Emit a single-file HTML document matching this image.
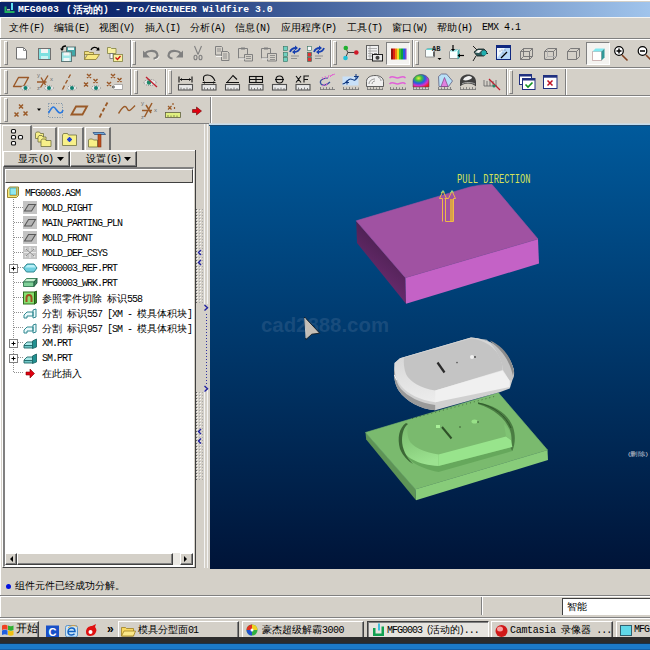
<!DOCTYPE html>
<html><head><meta charset="utf-8">
<style>
*{margin:0;padding:0;box-sizing:border-box}
html,body{width:650px;height:650px;overflow:hidden;background:#d4d0c8;font-family:"Liberation Sans",sans-serif}
.a{position:absolute}
svg{position:absolute;overflow:visible}
#title{left:0;top:2px;width:650px;height:15px;background:linear-gradient(90deg,#0a246a 0%,#0a246a 15%,#a0c4ec 100%)}
.menu{top:17px;height:21px;font-size:10px;line-height:22px;color:#000;white-space:nowrap}
.m{font-family:"Liberation Mono",monospace;letter-spacing:-1px}
.hl{background:#fff}
.sh{background:#808080}
.grip{position:absolute;width:4px;border-left:1px solid #fff;border-top:1px solid #fff;border-right:1px solid #808080;border-bottom:1px solid #808080}
.vsep{position:absolute;width:2px;border-left:1px solid #808080;border-right:1px solid #fff}
#vp{left:210px;top:125px;width:440px;height:444px;background:linear-gradient(180deg,#005a9c 0%,#001438 100%)}
.tree{position:absolute;left:42px;margin-top:1px;font-size:10px;line-height:15px;color:#000;white-space:nowrap;height:15px}
.btn{position:absolute;border-left:1px solid #fff;border-top:1px solid #fff;border-right:1px solid #404040;border-bottom:1px solid #404040;box-shadow:inset -1px -1px 0 #808080}
.tb{position:absolute;font-size:10px;line-height:15px;white-space:nowrap;color:#000}
</style></head><body>
<!-- outer light border -->
<div class="a hl" style="left:0;top:0;width:650px;height:1px"></div>
<div class="a hl" style="left:0;top:0;width:1px;height:618px"></div>
<!-- title -->
<div id="title" class="a"></div>
<div class="a" style="left:18px;top:2px;height:15px;color:#fff;font:bold 9.72px/15px 'Liberation Mono',monospace;white-space:nowrap">MFG0003</div>
<div class="a" style="left:66px;top:2px;height:15px;color:#fff;font:bold 9.72px/15px 'Liberation Mono',monospace;white-space:nowrap">(</div>
<div class="a" style="left:73px;top:2px;height:15px;color:#fff;font:bold 9.5px/15px 'Liberation Sans',sans-serif;white-space:nowrap;letter-spacing:0.2px">活动的</div>
<div class="a" style="left:103px;top:2px;height:15px;color:#fff;font:bold 9.72px/15px 'Liberation Mono',monospace;white-space:nowrap">)</div>
<div class="a" style="left:115px;top:2px;height:15px;color:#fff;font:bold 9.72px/15px 'Liberation Mono',monospace;white-space:nowrap">- Pro/ENGINEER Wildfire 3.0</div>
<svg style="left:0;top:0" width="20" height="18"><path d="M4.5 6.5h2v4.5h8v2h-10z" fill="#20b060"/><rect x="11" y="3" width="2" height="7" fill="#60e0f0"/><rect x="7" y="9" width="3" height="1.5" fill="#c0c0c0"/></svg>

<div class="a" style="left:0;top:17px;width:650px;height:1px;background:#f4f4f2"></div>
<!-- menu -->
<div class="a menu" style="left:9px">文件<span class="m">(F)</span></div>
<div class="a menu" style="left:54px">编辑<span class="m">(E)</span></div>
<div class="a menu" style="left:99px">视图<span class="m">(V)</span></div>
<div class="a menu" style="left:145px">插入<span class="m">(I)</span></div>
<div class="a menu" style="left:190px">分析<span class="m">(A)</span></div>
<div class="a menu" style="left:235px">信息<span class="m">(N)</span></div>
<div class="a menu" style="left:281px">应用程序<span class="m">(P)</span></div>
<div class="a menu" style="left:347px">工具<span class="m">(T)</span></div>
<div class="a menu" style="left:392px">窗口<span class="m">(W)</span></div>
<div class="a menu" style="left:437px">帮助<span class="m">(H)</span></div>
<div class="a menu m" style="left:482px;letter-spacing:-0.5px">EMX 4.1</div>

<!-- horizontal separators -->
<div class="a sh" style="left:0;top:38px;width:650px;height:1px"></div>
<div class="a hl" style="left:0;top:39px;width:650px;height:1px"></div>
<div class="a sh" style="left:0;top:67px;width:650px;height:1px"></div>
<div class="a hl" style="left:0;top:68px;width:650px;height:1px"></div>
<div class="a sh" style="left:0;top:95px;width:650px;height:1px"></div>
<div class="a hl" style="left:0;top:96px;width:650px;height:1px"></div>
<div class="a sh" style="left:0;top:123px;width:211px;height:1px"></div>

<!-- toolbar vertical separators -->
<div class="vsep" style="left:130px;top:40px;height:27px"></div>
<div class="vsep" style="left:330px;top:40px;height:27px"></div>
<div class="vsep" style="left:412px;top:40px;height:27px"></div>
<div class="vsep" style="left:130px;top:69px;height:26px"></div>
<div class="vsep" style="left:165px;top:69px;height:26px"></div>
<div class="vsep" style="left:506px;top:69px;height:26px"></div>
<div class="vsep" style="left:565px;top:69px;height:26px"></div>
<div class="vsep" style="left:210px;top:97px;height:27px"></div>
<!-- grips -->
<div class="grip" style="left:4px;top:41px;height:24px"></div>
<div class="grip" style="left:132px;top:41px;height:24px"></div>
<div class="grip" style="left:333px;top:41px;height:24px"></div>
<div class="grip" style="left:415px;top:41px;height:24px"></div>
<div class="grip" style="left:4px;top:70px;height:24px"></div>
<div class="grip" style="left:134px;top:70px;height:24px"></div>
<div class="grip" style="left:168px;top:70px;height:24px"></div>
<div class="grip" style="left:509px;top:70px;height:24px"></div>
<div class="grip" style="left:4px;top:98px;height:24px"></div>
<!-- pressed buttons -->
<div class="a" style="left:386px;top:42px;width:24px;height:23px;background:#f4f3f0;border-left:1px solid #808080;border-top:1px solid #808080;border-right:1px solid #fff;border-bottom:1px solid #fff"></div>
<div class="a" style="left:586px;top:42px;width:24px;height:23px;background:#f4f3f0;border-left:1px solid #808080;border-top:1px solid #808080;border-right:1px solid #fff;border-bottom:1px solid #fff"></div>

<!-- ROW 1 ICONS -->
<svg style="left:0;top:0" width="650" height="130">
<!-- new -->
<path d="M16.5 47.5h7l3 3v8.5h-10z" fill="#fff" stroke="#707070"/>
<path d="M23.5 47.5v3h3" fill="none" stroke="#909090"/>
<!-- save -->
<rect x="38.5" y="48.5" width="12" height="11" fill="#7ee0e0" stroke="#707070"/>
<rect x="41" y="49" width="7" height="4" fill="#f4f4f4"/>
<rect x="41" y="56" width="7" height="3" fill="#c8f4f4"/>
<!-- save as -->
<rect x="66.5" y="47" width="9" height="9" fill="#40a8a8" stroke="#607070"/>
<rect x="68" y="47.5" width="6" height="2.5" fill="#e8f8f8"/>
<rect x="61.5" y="52" width="10" height="9.5" fill="#a0e8e8" stroke="#607878"/>
<rect x="63.5" y="52.5" width="6" height="3" fill="#f4f4f4"/>
<rect x="63.5" y="58" width="6" height="3" fill="#f0f8f8"/>
<path d="M66 46c-3 0-4 1-4 3.5" fill="none" stroke="#000" stroke-width="1.3"/><path d="M60 48.5l2 2.5 2-2.5z" fill="#000"/>
<!-- open -->
<path d="M84.5 51.5h4l1 1h4v2h-9z" fill="#f0e080" stroke="#8a7a30" stroke-width="0.8"/>
<path d="M84.5 59.5l3-5h12l-3.5 5z" fill="#f8e880" stroke="#8a7a30" stroke-width="0.8"/>
<path d="M84.5 54v5.5" stroke="#8a7a30" stroke-width="0.8"/>
<path d="M91 50c1-3 5-3.5 7-1" fill="none" stroke="#000" stroke-width="1.3"/><path d="M96 50.5l3.5 0 -0.5-3.5z" fill="#000"/>
<!-- checkout -->
<path d="M107.5 47.5h3l1 1h4.5v5h-8.5z" fill="#f8f0a0" stroke="#808040" stroke-width="0.8"/>
<rect x="110" y="53.5" width="3" height="5" fill="#fff" stroke="#707070" stroke-width="0.8"/>
<rect x="113.5" y="54.5" width="9" height="7" fill="#f8f0a0" stroke="#808040" stroke-width="0.8"/>
<path d="M115.5 57.5l2 2 3-3.5" fill="none" stroke="#d01010" stroke-width="1.3"/>
<!-- undo -->
<path d="M145 54.5c1-4 10-5 12-1 1.5 3-1 5-3.5 5" fill="none" stroke="#808080" stroke-width="2.2"/>
<path d="M143 50.5v7h7z" fill="#808080"/>
<path d="M155 59.5c2 0 4-1 4-3" fill="none" stroke="#fff" stroke-width="0.8"/>
<!-- redo -->
<path d="M181 54.5c-1-4-10-5-12-1-1.5 3 1 5 3.5 5" fill="none" stroke="#808080" stroke-width="2.2"/>
<path d="M183 50.5v7h-7z" fill="#808080"/>
<!-- cut -->
<path d="M194.5 46l3.5 8.5M201.5 46l-3.5 8.5" stroke="#808080" stroke-width="1.1"/>
<ellipse cx="195.5" cy="57.5" rx="1.5" ry="2.3" fill="none" stroke="#808080" stroke-width="1.1"/>
<ellipse cx="200.5" cy="57.5" rx="1.5" ry="2.3" fill="none" stroke="#808080" stroke-width="1.1"/>
<!-- copy -->
<g fill="#d4d0c8" stroke="#808080" stroke-width="1"><path d="M215.5 46.5h6l1 1v7.5h-7z"/><path d="M221.5 51.5h6l1.5 1.5v7.5h-7.5z"/><path d="M238.5 48.5h9v9.5h-9z"/><path d="M244.5 54.5h8v6.5h-8z"/><path d="M261.5 48.5h9v9.5h-9z"/><path d="M267.5 53.5h9v7.5h-9z"/></g>
<g stroke="#808080" stroke-width="0.8"><path d="M217 49h4M217 51h4M223 54h4M223 56h4M223 58h4M246 56.5h5M246 58.5h5M270 55.5h5M270 57.5h5M270 59.5h5"/></g>
<path d="M241 47.5h4v2h-4zM264 47.5h4v2h-4z" fill="#808080"/>
<g fill="#fff"><path d="M216 56h6v0.8h-6zM239 58.5h6v0.8h-6zM262 58.5h6v0.8h-6z"/></g>
<!-- regen 1 -->
<g stroke="#307060" stroke-width="0.6"><rect x="283.5" y="46.5" width="4" height="4" fill="#70d0c0"/><rect x="283.5" y="52.5" width="4" height="4" fill="#70d0c0"/><rect x="283.5" y="57.5" width="4" height="4" fill="#70d0c0"/>
<rect x="307.5" y="46.5" width="4" height="4" fill="#f8f8f8"/><rect x="307.5" y="52.5" width="4" height="4" fill="#e03030"/><rect x="307.5" y="57.5" width="4" height="4" fill="#e03030"/></g>
<g fill="none" stroke="#1840b0" stroke-width="1.8"><path d="M290 52c1-3 3-4 6-4M300 48c-1 3-3 4-6 4M314 52c1-3 3-4 6-4M324 48c-1 3-3 4-6 4"/></g>
<g fill="#1840b0"><path d="M295 45.5l3 2.5-3 2.5zM295 49.5l-3 2.5 3 2.5zM319 45.5l3 2.5-3 2.5zM319 49.5l-3 2.5 3 2.5z"/></g>
<path d="M291 56h8M291 58.5h6M315 56h8M315 58.5h6" stroke="#909090" stroke-width="1"/>
<!-- datum display -->
<path d="M346 48.5l1.8 4h8.5M347.8 52.5l-2.3 5.5" stroke="#404040" stroke-width="1" fill="none"/>
<circle cx="345.8" cy="48" r="2.3" fill="#20b030"/><circle cx="356.3" cy="52.5" r="2.3" fill="#d01828"/><circle cx="345.5" cy="58" r="2.3" fill="#20c0d8"/>
<!-- report -->
<rect x="366.5" y="45.5" width="12" height="14" fill="#f0f0f0" stroke="#606060"/>
<path d="M368 48.5h9M368 51h9M368 53.5h5M368 56h4M370 46v13" stroke="#a0a0a0" stroke-width="0.8"/>
<rect x="372.5" y="54.5" width="10" height="6.5" fill="#e8e8e8" stroke="#202020"/>
<circle cx="377.5" cy="57.8" r="2" fill="#404040"/><rect x="374" y="53.5" width="3" height="1.5" fill="#202020"/>
<!-- rainbow -->
<g><rect x="391" y="48.5" width="2" height="11" fill="#901010"/><rect x="393" y="48.5" width="2" height="11" fill="#e02010"/><rect x="395" y="48.5" width="2" height="11" fill="#f08010"/><rect x="397" y="48.5" width="2" height="11" fill="#f0e020"/><rect x="399" y="48.5" width="2" height="11" fill="#40c030"/><rect x="401" y="48.5" width="2" height="11" fill="#10a040"/><rect x="403" y="48.5" width="2" height="11" fill="#2060e0"/><rect x="405" y="48.5" width="1.5" height="11" fill="#8040d0"/></g>
<!-- AB -->
<path d="M425.5 50l2-1.5h7v8.5h-9z" fill="#f8ffff" stroke="#808080" stroke-width="0.8"/>
<path d="M426 50l1.5-1.5h7l-1 1.5z" fill="#60d8d8"/>
<text x="432" y="50.5" font-family="Liberation Mono" font-size="7" font-weight="bold" fill="#202020">AB</text>
<rect x="433" y="51.5" width="2" height="5" fill="#606060"/>
<path d="M437.5 58h4l-2 2z" fill="#000"/>
<!-- view arrows -->
<path d="M449.5 51.5l2-2h6l1 1v8h-9z" fill="#f8ffff" stroke="#808080" stroke-width="0.8"/>
<path d="M457.5 51l2-2v9l-2 1.5z" fill="#40b0b0"/>
<path d="M450 51.5l2-2h6l-2 2z" fill="#90e8e8"/>
<path d="M453 45v5" stroke="#000" stroke-width="1.2"/><path d="M451 49h4l-2 2.5z" fill="#000"/>
<path d="M464 55.5h-5" stroke="#000" stroke-width="1.2"/><path d="M460 53.5v4l-2.5-2z" fill="#000"/>
<!-- spin -->
<path d="M473 46l4 4M476 56l-3 5M481 53.5h7" stroke="#202020" stroke-width="1"/>
<path d="M474 52l4-3h6l3 3-3 4h-7z" fill="#305858" stroke="#102020" stroke-width="0.8"/>
<path d="M475 52.5l3-2.5h4l-3 3z" fill="#f0f0f0"/>
<circle cx="484" cy="53" r="2.5" fill="#20b0b0"/>
<!-- window icon -->
<rect x="496.5" y="45.5" width="14" height="14" fill="#b8d8f8" stroke="#102880"/>
<rect x="496.5" y="45.5" width="14" height="2.5" fill="#102880"/>
<path d="M497 48h8l-8 10z" fill="#f0f8ff"/>
<path d="M501 58l6-6" stroke="#000" stroke-width="1.2"/>
<g fill="#607090"><circle cx="500" cy="51" r="0.6"/><circle cx="502" cy="50" r="0.6"/><circle cx="503" cy="53" r="0.6"/><circle cx="505" cy="50" r="0.6"/></g>
<!-- wire cubes -->
<g fill="none" stroke="#707070" stroke-width="0.9">
<path d="M520.5 51.5h9v8h-9zM520.5 51.5l3-3h9l-3 3M532.5 48.5v8l-3 3M523.5 48.5v8h9M523.5 56.5l-3 3"/>
<path d="M544.5 51.5h9v8h-9zM544.5 51.5l3-3h9l-3 3M556.5 48.5v8l-3 3"/>
<path d="M547.5 48.5v8h9M547.5 56.5l-3 3" stroke="#b0b0b0"/>
<path d="M567.5 51.5h9v8h-9zM567.5 51.5l3-3h9l-3 3M579.5 48.5v8l-3 3"/>
</g>
<!-- shaded cube -->
<path d="M592.5 51.5h9v9h-9z" fill="#fff" stroke="#a07070" stroke-width="0.5"/>
<path d="M592.5 51.5l3-3h9l-3 3z" fill="#80e8f0"/>
<path d="M601.5 51.5l3-3v9l-3 3z" fill="#309898"/>
<!-- zoom in/out -->
<path d="M622 55l5.5 5.5M646 55l5.5 5.5" stroke="#804020" stroke-width="1.6"/>
<circle cx="619" cy="51" r="4.3" fill="#fff" stroke="#000" stroke-width="1.2"/>
<circle cx="642.5" cy="51" r="4.3" fill="#fff" stroke="#000" stroke-width="1.2"/>
<path d="M616.5 51h5M619 48.5v5M640 51h5" stroke="#000" stroke-width="1.4"/>
<!-- ===== ROW 2 ===== -->
<g fill="none" stroke="#9a5828" stroke-width="1.4" stroke-linejoin="round">
<path d="M13.5 86.5l5-9h10l-5 9z"/>
<path d="M48 75.5l-7.5 12M37 82h9.5M41 77.5l4.5 7.5"/>
<path d="M70.5 74.5l-2 3.5M67.5 80l-2 3.5M64.5 85.5l-2 4"/>
<path d="M87 74l4 4M91 74l-4 4M93.5 79l4 4M97.5 79l-4 4M84 82.5l4 4M88 82.5l-4 4"/>
<path d="M111 74l4 4M115 74l-4 4M117.5 78l4 4M121.5 78l-4 4M107 82l4 4M111 82l-4 4"/>
</g>
<g font-family="Liberation Sans" font-size="6" fill="#707070"><text x="37" y="77">y</text><text x="37" y="90">z</text><text x="50" y="81">x</text></g>
<!-- eyes -->
<g><ellipse cx="25.5" cy="88" rx="4.5" ry="2.3" fill="#e8e8e8" stroke="#606060" stroke-width="0.6" stroke-dasharray="1 1"/><circle cx="25.5" cy="88" r="2" fill="#108070"/>
<ellipse cx="49" cy="88" rx="4.5" ry="2.3" fill="#e8e8e8" stroke="#606060" stroke-width="0.6" stroke-dasharray="1 1"/><circle cx="49" cy="88" r="2" fill="#108070"/>
<ellipse cx="72" cy="88" rx="4.5" ry="2.3" fill="#e8e8e8" stroke="#606060" stroke-width="0.6" stroke-dasharray="1 1"/><circle cx="72" cy="88" r="2" fill="#108070"/>
<ellipse cx="96" cy="88" rx="4.5" ry="2.3" fill="#e8e8e8" stroke="#606060" stroke-width="0.6" stroke-dasharray="1 1"/><circle cx="96" cy="88" r="2" fill="#108070"/></g>
<path d="M114.5 84.5h8v5h-8l-2-2.5z" fill="#fff" stroke="#909090" stroke-width="0.7"/>
<path d="M115 87h-3" stroke="#000" stroke-width="0.8"/>
<!-- eye crossed -->
<ellipse cx="150" cy="82.5" rx="6" ry="3" fill="#e8e8e8" stroke="#606060" stroke-width="0.7" stroke-dasharray="1 1"/>
<circle cx="149" cy="82.5" r="2.2" fill="#208868"/>
<path d="M146 77l11 10" stroke="#c02030" stroke-width="1.3"/>
<!-- rulers (white boxed) -->
<g fill="#e8e8e8" stroke="#505050" stroke-width="1.1">
<rect x="178.5" y="84.5" width="14" height="5.5"/><rect x="202" y="84.5" width="14" height="5.5"/><rect x="225.5" y="84.5" width="14" height="5.5"/><rect x="249" y="84.5" width="14" height="5.5"/><rect x="272.5" y="84.5" width="14" height="5.5"/><rect x="296" y="84.5" width="14" height="5.5"/>
</g>
<g stroke="#606060" stroke-width="0.8"><path d="M181 87.5v2M184 88v2M187 87.5v2M190 88v2M204.5 87.5v2M207.5 88v2M210.5 87.5v2M213.5 88v2M228 87.5v2M231 88v2M234 87.5v2M237 88v2M251.5 87.5v2M254.5 88v2M257.5 87.5v2M260.5 88v2M275 87.5v2M278 88v2M281 87.5v2M284 88v2M298.5 87.5v2M301.5 88v2M304.5 87.5v2M307.5 88v2"/></g>
<g fill="none" stroke="#101010" stroke-width="1.1">
<path d="M179 76.5v6M192 76.5v6M180 79.5h11"/>
<path d="M202.5 82.5h13M203.5 81v-3c0-2 2-3 4-3 3 0 6 2 7.5 6"/>
<path d="M226 82.5h13M227 82.5l6-7 4 4"/>
<rect x="249.5" y="76.5" width="13" height="6"/><path d="M249.5 79.5h13M256 76.5v6"/>
<circle cx="279.5" cy="79.5" r="3.5"/><path d="M275 79.5h9"/>
<path d="M296 76l5 6.5M301 76l-5 6.5M304 82.5v-6.5h5M304 79.5h4"/>
</g>
<g fill="#101010"><path d="M180 79.5l2-1.5v3zM191 79.5l-2-1.5v3zM203 82.5l2-1.3v2.6zM215 82.5l-2-1.3v2.6z"/></g>
<!-- tick rulers -->
<g stroke="#707070" stroke-width="0.8"><path d="M320 89.5h15M343 89.5h16M367 89.5h16M390 89.5h16M413 89.5h16M438 89.5h14M460 89.5h16M320.5 87v2.5M323.5 87.5v2M326.5 87v2.5M329.5 87.5v2M332.5 87v2.5M343.5 87v2.5M346.5 87.5v2M349.5 87v2.5M352.5 87.5v2M355.5 87v2.5M358.5 87.5v2M367.5 87v2.5M370.5 87.5v2M373.5 87v2.5M376.5 87.5v2M379.5 87v2.5M382.5 87.5v2M390.5 87v2.5M393.5 87.5v2M396.5 87v2.5M399.5 87.5v2M402.5 87v2.5M405.5 87.5v2M413.5 87v2.5M416.5 87.5v2M419.5 87v2.5M422.5 87.5v2M425.5 87v2.5M428.5 87.5v2M438.5 87v2.5M441.5 87.5v2M444.5 87v2.5M447.5 87.5v2M450.5 87v2.5M460.5 87v2.5M463.5 87.5v2M466.5 87v2.5M469.5 87.5v2M472.5 87v2.5M475.5 87.5v2"/></g>
<!-- curvature -->
<path d="M328 78c-6 0-9 3-7 6 2 2 6 1 9-2" fill="none" stroke="#3050a0" stroke-width="1.2"/>
<path d="M322 77l2 3M325 76l1 3M329 75l-1 3M333 74l-3 3M335 74l-5 2M322 86l3-2M326 86l1-3" stroke="#e060d0" stroke-width="0.9"/>
<!-- blue curve box -->
<rect x="342.5" y="76.5" width="16" height="9" fill="#c8e0f8"/>
<path d="M342.5 84c4 0 5-5 8-5s4 4 8-3" fill="none" stroke="#103880" stroke-width="1.1"/>
<path d="M347 80.5v4M345 82.5h4M356 74v5M354 76.5h4" stroke="#103880" stroke-width="1"/>
<!-- contour dome -->
<path d="M366.5 86.5v-5c0-4 4-6 8.5-6s8.5 2 8.5 6v5z" fill="#f0f0f0" stroke="#505050" stroke-width="0.9"/>
<path d="M369 84c0-3 3-5 6-5M372 84c0-2 2-3 3-3M378 77c2 1 3 2 3 4" fill="none" stroke="#808080" stroke-width="0.8"/>
<!-- waves -->
<path d="M389.5 78c3-3 5 0 8 0s5-3 8 0M389.5 84c3-3 5 0 8 0s5-3 8 0" fill="none" stroke="#e060d8" stroke-width="1.5"/>
<!-- rainbow dome -->
<defs><radialGradient id="rg" cx="0.35" cy="0.3" r="0.8"><stop offset="0" stop-color="#e8f040"/><stop offset="0.25" stop-color="#40c040"/><stop offset="0.5" stop-color="#2060e0"/><stop offset="0.75" stop-color="#d030d0"/><stop offset="1" stop-color="#f02020"/></radialGradient></defs>
<path d="M413 87v-6c0-4 4-6.5 8-6.5s8 2.5 8 6.5v6z" fill="url(#rg)" stroke="#404040" stroke-width="0.5"/>
<!-- prism -->
<path d="M438.5 76.5l3-2.5h5l6 7-4 5.5h-9.5z" fill="#b8e0f8" stroke="#606080" stroke-width="0.8"/>
<path d="M441 86.5l3.5-9 3.5 9z" fill="#e080e0" stroke="#804080" stroke-width="0.7"/>
<!-- gray dome -->
<path d="M460 86.5v-5c0-4.5 4-7 8-7s8 2.5 8 7v5c-2-2-5-3-8-3s-6 1-8 3z" fill="#404040"/>
<path d="M463 80c1-3 4-4 6-4s3 1 3 2c-2 2-6 3-9 2z" fill="#f0f0f0"/>
<path d="M462 84c2-2 10-2 13 0" fill="none" stroke="#c0c0c0" stroke-width="0.8"/>
<!-- ticks crossed -->
<path d="M484 80v6M487 81v5M490 80v6M493 81v5M496 80v6M484 86h13" stroke="#606060" stroke-width="0.8"/>
<path d="M489 79l11 11" stroke="#c02030" stroke-width="1.3"/>
<circle cx="494" cy="86" r="1.5" fill="#208868"/>
<!-- window check / x -->
<rect x="519.5" y="74.5" width="12" height="10" fill="#fff" stroke="#203080"/>
<rect x="519.5" y="74.5" width="12" height="2" fill="#203080"/>
<rect x="522.5" y="78.5" width="12.5" height="11" fill="#fff" stroke="#203080"/>
<rect x="522.5" y="78.5" width="12.5" height="2" fill="#203080"/>
<path d="M525.5 84.5l2.5 2.5 4.5-4.5" fill="none" stroke="#109020" stroke-width="1.6"/>
<rect x="543.5" y="75.5" width="13.5" height="13" fill="#fff" stroke="#203080"/>
<rect x="543.5" y="75.5" width="13.5" height="2.2" fill="#203080"/>
<path d="M547.5 80.5l5 5M552.5 80.5l-5 5" stroke="#c01020" stroke-width="1.5"/>
<!-- ===== ROW 3 ===== -->
<g fill="none" stroke="#9a5a28" stroke-width="1.5">
<path d="M19 104.5l4 4M23 104.5l-4 4M23.5 111.5l4 4M27.5 111.5l-4 4M14.5 112.5l4 4M18.5 112.5l-4 4"/>
<path d="M71.5 114.5l4.5-8h11l-4.5 8z" stroke-width="1.8"/>
<path d="M107.5 102.5l-2 3.5M104.5 108l-2 3.5M101.5 113.5l-2 4" stroke-width="1.8"/>
<path d="M118.5 113.5c2-3 4-7 6.5-7s2 4 4 4 4-3 6-5" stroke-width="1.4"/>
<path d="M152 103l-7.5 14M142 110.5h10M146 105l5 8" />
<path d="M168 106l3.5 3.5M171.5 106l-3.5 3.5M173 103v2M174.5 107v2" stroke-width="1.2"/>
</g>
<g font-family="Liberation Sans" font-size="6" fill="#707070"><text x="141" y="105">y</text><text x="141" y="119">z</text><text x="154" y="112">x</text></g>
<path d="M37 108.5h4l-2 2.5z" fill="#000"/>
<rect x="48.5" y="103.5" width="14" height="14" fill="none" stroke="#6080a0" stroke-width="0.8" stroke-dasharray="1 1.5"/>
<path d="M48.5 113c2-3 3-6 5-6s4 6 6.5 6 2.5-2 3-3" fill="none" stroke="#2878e0" stroke-width="1.6"/>
<rect x="165.5" y="112.5" width="15" height="5" fill="#e0f080" stroke="#606040" stroke-width="0.8"/>
<path d="M168 115v2M171 115.5v1.5M174 115v2M177 115.5v1.5" stroke="#606040" stroke-width="0.7"/>
<path d="M192.5 109.5h4v-2.5l5 4-5 4v-2.5h-4z" fill="#e00010" stroke="#700000" stroke-width="0.6"/>
</svg>
<!-- viewport -->
<div id="vp" class="a"></div>
<div class="a" style="left:209px;top:123px;width:441px;height:1px;background:#d0d8dc"></div>
<div class="a" style="left:209px;top:124px;width:441px;height:1px;background:#c0dcf0"></div>
<div class="a" style="left:209px;top:125px;width:441px;height:1px;background:#1a4a74"></div>
<svg style="left:0;top:0" width="650" height="570">
<!-- watermark -->
<text x="261" y="331.5" font-family="Liberation Sans" font-weight="bold" font-size="20" fill="#3c6690" fill-opacity="0.42" textLength="128" lengthAdjust="spacingAndGlyphs">cad2888.com</text>
<!-- magenta block -->
<defs><linearGradient id="mg" x1="0.6" y1="0.2" x2="0.3" y2="0.8"><stop offset="0" stop-color="#4a2050"/><stop offset="1" stop-color="#6e2c72"/></linearGradient></defs>
<path d="M356.2 220.8L405.4 277.7L406 303.8L357 243z" fill="url(#mg)"/>
<path d="M405.4 277.7L538 239L539 263.6L406 303.8z" fill="#c462c6"/>
<path d="M356.2 220.8L470 187Q482 184 492 184.5L538 239L405.4 277.7z" fill="#a052a2" stroke="#a052a2" stroke-width="0.6"/>
<!-- pull direction -->
<text x="457" y="183.3" font-family="Liberation Mono" font-size="12" fill="#d4e258" textLength="73.5" lengthAdjust="spacingAndGlyphs">PULL DIRECTION</text>
<g fill="none" stroke="#f0b848" stroke-width="1">
<path d="M442.5 221.5V198.5H439.5L443 191L446.5 198.5H444.5"/>
<path d="M445.5 221.5H453.5V198.5H455.5L452 191L448.5 198.5H445.5z"/>
</g>
<rect x="450" y="199" width="3" height="22" fill="#d8a048"/>
<path d="M441 193l2-2.5 1.5 2M450.5 193l1.5-2.5 1.5 2" stroke="#90e090" fill="none"/>
<!-- green plate -->
<path d="M365.5 432.5L415.4 489.2L416 500.3L366.2 439.4z" fill="#5e9456"/>
<path d="M415.4 489.2L547.5 450L548 460L416 500.3z" fill="#88cc7a"/>
<path d="M365.5 432.5L498.4 392.8L547.5 450L415.4 489.2z" fill="#7aba6e" stroke="#7aba6e" stroke-width="0.6"/>
<!-- groove lit ring -->
<defs><linearGradient id="gr" x1="0" y1="0" x2="0.3" y2="1"><stop offset="0" stop-color="#7aba6e"/><stop offset="0.45" stop-color="#86ca7a"/><stop offset="1" stop-color="#9ce290"/></linearGradient>
<linearGradient id="gy" x1="0" y1="0" x2="0.2" y2="1"><stop offset="0" stop-color="#cfcfcf"/><stop offset="1" stop-color="#ececec"/></linearGradient></defs>
<path d="M406 423C400 428 398 436 400 446C404 458 418 466 438.5 468L438.5 454.6C424 452 412 447 409 440C407 434 407 429 408 426z" fill="url(#gr)"/>
<path d="M400 446C404 459 418 468 438.5 472L512.3 451L512.3 447L438.5 466C418 465 404 457 400 446z" fill="#66a85c"/>
<path d="M406 423C399 428 397 438 400 449C403 456 408 461 413 464C406 457 402 448 402 440C402 433 404 427 408 424z" fill="#3c6836"/>
<path d="M478 402.5C495 405 508 414 513 427C516 436 515 445 512.3 451L510.5 448C512 442 512 436 510 430C505 418 494 409 478 404z" fill="#4a7c42"/>
<path d="M438.5 454.6L506 436.5L511 440L512.3 447L438.5 466z" fill="#98e48c"/>
<path d="M506 436.5L511 440L510.5 434C509 430 507 427 504 424z" fill="#80c474"/>
<!-- slot in green -->
<path d="M442 427L451.5 438.5" stroke="#2e5028" stroke-width="2"/>
<rect x="436" y="425" width="4" height="3" fill="#a8f098"/>
<ellipse cx="474.5" cy="421.5" rx="3" ry="2" fill="#98e088"/><circle cx="478" cy="422" r="0.8" fill="#2e5028"/>
<circle cx="460" cy="427" r="0.8" fill="#385a30"/>
<path d="M412 418.5L496 396" stroke="#305028" stroke-width="0.7" stroke-dasharray="1 3" fill="none"/>
<path d="M478 403C494 406 506 416 511 428" fill="none" stroke="#2e5a2a" stroke-width="1"/>
<!-- gray piece -->
<path d="M394.6 363L400 358.3L471 337.5C492.7 339 510 352 514 371C514.5 375 513.5 378 512.7 379L509.8 388.4L500.3 392L435.2 410.3C420 409 406 401 399 391C395 385 394 378 394 372z" fill="#d0d0d0"/>
<path d="M394 372C394 378 395 385 399 391C406 401 420 409 435.2 410.3L435.2 405C420 403 407 396 401 389C397 384 395 378 394.5 368z" fill="#9a9a9a"/>
<path d="M394.6 363L400 358.3L471 337.5C492.7 339 510 352 514 371L509.8 381L435.2 402.3C420 400 408 394 402 387C397 381 395 375 394.6 368z" fill="url(#gy)"/>
<path d="M403.9 357.8L471 338.5C485 340 496 348 500 358C502 363 503 367 502.5 370L435.2 390.6C420 388 410 382 406 374C404 369 403.5 363 403.9 357.8z" fill="#c4c4c4"/>
<path d="M471 337.5C492.7 339 510 352 514 371L512.7 379L509.8 381L503 370C502 360 496 348 486.8 339.8z" fill="#c4c4c4"/>
<path d="M490 340.5C503 346 511 357 514 371L513 376C510 362 503 351 492 343z" fill="#8c8c8c"/>
<path d="M435.2 390.6L502.5 370.8L509.8 381L509.8 387L435.2 402.3z" fill="#f0f0f0"/>
<path d="M394.5 375L396.5 380" stroke="#f8f8f8" stroke-width="1"/>
<!-- slots in gray -->
<path d="M437.5 362.5L444.5 372.5" stroke="#2a2a2a" stroke-width="2.2"/>
<circle cx="472" cy="357" r="2" fill="#f0f0f0"/><circle cx="475" cy="357" r="0.9" fill="#404040"/>
<circle cx="457" cy="362.6" r="0.8" fill="#505050"/>
<text x="628" y="456" font-family="Liberation Sans" font-size="6" fill="#c8ccd8" textLength="20" lengthAdjust="spacingAndGlyphs">(删除)</text>
<!-- cursor -->
<path d="M304.5 317L319.7 333.2L311.8 334.2L305.9 339.6z" fill="#c4beb6" stroke="#101820" stroke-width="0.9"/>
<path d="M304.8 318L306 338" stroke="#e0e8f0" stroke-width="0.8"/>
</svg>

<!-- ===== left panel ===== -->
<!-- tabs -->
<div class="a" style="left:2px;top:125px;width:30px;height:26px;background:#d4d0c8;border-left:1px solid #fff;border-top:1px solid #fff;border-right:2px solid #707070"></div>
<div class="a" style="left:33px;top:127px;width:24px;height:23px;border-top:1px solid #fff;border-right:2px solid #707070"></div>
<div class="a" style="left:58px;top:127px;width:26px;height:23px;border-left:1px solid #fff;border-top:1px solid #fff;border-right:2px solid #707070"></div>
<div class="a" style="left:85px;top:127px;width:26px;height:23px;border-left:1px solid #fff;border-top:1px solid #fff;border-right:2px solid #707070"></div>
<svg style="left:0;top:0" width="120" height="155">
<g fill="#fff" stroke="#101010" stroke-width="1.1"><rect x="11.5" y="129.5" width="4" height="3.5" rx="1"/><rect x="11.5" y="135.5" width="4" height="3.5" rx="1"/><rect x="18.5" y="135.5" width="4" height="3.5" rx="1"/><rect x="11.5" y="141.5" width="4" height="3.5" rx="1"/></g>
<g fill="#f8f088" stroke="#707040" stroke-width="0.8"><path d="M35.5 133.5l1-1.5h3l1 1.5h3v5h-8z"/><path d="M38 137l1-1.5h3l1 1.5h3v5h-8z"/><path d="M41 140.5l1-1.5h3l1 1.5h5v6h-10z"/>
<path d="M62.5 135l1-1.5h4l1 1.5h8v10.5h-14z"/>
<path d="M88.5 140l1-1h3l1 1h4v7h-9z"/></g>
<path d="M67 139.5h5M69.5 137v5M67.8 137.8l3.4 3.4M71.2 137.8l-3.4 3.4" stroke="#2040d0" stroke-width="1.2"/>
<path d="M93 132.5h11l1.5 2h-11z" fill="#70a8d8" stroke="#305080" stroke-width="0.8"/>
<rect x="98" y="134.5" width="3" height="12.5" fill="#c05020" stroke="#803010" stroke-width="0.6"/>
</svg>
<!-- button strip panel -->
<div class="a" style="left:2px;top:150px;width:194px;height:418px;border-left:1px solid #fff;border-top:1px solid #fff;border-right:1px solid #404040;border-bottom:1px solid #404040"></div>
<div class="a hl" style="left:3px;top:150px;width:28px;height:1px;background:#d4d0c8"></div>
<div class="btn" style="left:3px;top:151px;width:67px;height:16px"></div>
<div class="btn" style="left:70px;top:151px;width:67px;height:16px"></div>
<div class="tb" style="left:18px;top:151px">显示<span class="m">(O)</span></div>
<div class="tb" style="left:86px;top:151px">设置<span class="m">(G)</span></div>
<svg style="left:0;top:0" width="200" height="200"><path d="M57 157h7l-3.5 4z M124 157h7l-3.5 4z" fill="#000"/></svg>
<!-- tree box -->
<div class="a" style="left:3px;top:167px;width:191px;height:400px;border-left:2px solid #808080;border-top:2px solid #808080;border-right:1px solid #fff;border-bottom:1px solid #fff;background:#fff"></div>
<div class="a" style="left:5px;top:169px;width:188px;height:14px;background:#d4d0c8;border-top:1px solid #fff;border-left:1px solid #fff;border-right:1px solid #404040;border-bottom:1px solid #404040"></div>
<!-- tree items -->
<div class="tree m" style="left:25px;top:185px">MFG0003.ASM</div>
<div class="tree m" style="top:200px">MOLD_RIGHT</div>
<div class="tree m" style="top:215px">MAIN_PARTING_PLN</div>
<div class="tree m" style="top:230px">MOLD_FRONT</div>
<div class="tree m" style="top:245px">MOLD_DEF_CSYS</div>
<div class="tree m" style="top:260px">MFG0003_REF.PRT</div>
<div class="tree m" style="top:275px">MFG0003_WRK.PRT</div>
<div class="tree" style="top:290px">参照零件切除<span class="m"> </span>标识<span class="m">558</span></div>
<div class="tree" style="top:305px">分割<span class="m"> </span>标识<span class="m">557 [XM - </span>模具体积块<span class="m">]</span></div>
<div class="tree" style="top:320px">分割<span class="m"> </span>标识<span class="m">957 [SM - </span>模具体积块<span class="m">]</span></div>
<div class="tree m" style="top:335px">XM.PRT</div>
<div class="tree m" style="top:350px">SM.PRT</div>
<div class="tree" style="top:365px">在此插入</div>
<!-- tree lines -->
<svg style="left:0;top:0" width="200" height="400">
<g stroke="#909090" stroke-width="1" stroke-dasharray="1 1" fill="none">
<path d="M13.5 199v174"/>
<path d="M14 207.5h9M14 222.5h9M14 237.5h9M14 252.5h9M18 267.5h5M14 282.5h9M14 297.5h9M14 312.5h9M14 327.5h9M18 342.5h5M18 357.5h5M14 372.5h9"/>
</g>
<g fill="#fff" stroke="#808080"><rect x="9.5" y="264.5" width="8" height="8"/><rect x="9.5" y="339.5" width="8" height="8"/><rect x="9.5" y="354.5" width="8" height="8"/></g>
<path d="M11.5 268.5h4M13.5 266.5v4M11.5 343.5h4M13.5 341.5v4M11.5 358.5h4M13.5 356.5v4" stroke="#000"/>
<!-- asm icon -->
<path d="M7.5 189.5 l2-2.5 h9 v8.5 l-2 2 h-9z" fill="#f8e878" stroke="#a08830"/>
<rect x="10" y="188" width="7" height="7" fill="#90e8f0" stroke="#40a0b0" stroke-width="0.8"/>
<path d="M16.5 188v7.5h-6.5" stroke="#c0a040" fill="none"/>
<!-- datum planes -->
<g fill="#c4c4c4"><rect x="23" y="201" width="14" height="13"/><rect x="23" y="216" width="14" height="13"/><rect x="23" y="231" width="14" height="13"/><rect x="23" y="246" width="14" height="13"/></g>
<g fill="#b4b4b4" stroke="#585858" stroke-width="1.1"><path d="M24.5 211l4-6.5h7l-4 6.5z"/><path d="M24.5 226l4-6.5h7l-4 6.5z"/><path d="M24.5 241l4-6.5h7l-4 6.5z"/></g>
<g stroke="#e8e8e8" stroke-width="1.2" fill="none"><path d="M25 248l10 9M35 248l-10 9M30 247v11M24 252.5h12"/></g>
<g stroke="#707070" stroke-width="0.8" fill="none"><path d="M26 249l8 7M34 249l-8 7"/></g>
<!-- ref prt -->
<path d="M23.5 268l3.5-4h7l3 4-3 4h-7.5z" fill="#70d0e0" stroke="#308890"/>
<path d="M25 267.5l2.5-2.5h6.5l2 2.5z" fill="#b8f0f8"/>
<!-- wrk prt -->
<path d="M23.5 282l3-3.5h10.5l-3 3.5z" fill="#c8f0d0" stroke="#307850" stroke-width="0.9"/>
<path d="M23.5 282h10.5v4.5h-10.5z" fill="#80d098" stroke="#307850" stroke-width="0.9"/>
<path d="M34 282l3-3.5v4.5l-3 3.5z" fill="#408860" stroke="#205840" stroke-width="0.9"/>
<!-- cut feature -->
<rect x="23.5" y="292" width="11" height="12" fill="#88e070" stroke="#307020"/>
<path d="M34.5 292l2-1v12l-2 1z" fill="#309020" stroke="#205010" stroke-width="0.8"/>
<path d="M26.5 302v-4a2.5 3 0 0 1 5 0v4" fill="none" stroke="#a05020" stroke-width="2"/>
<!-- split outlines -->
<g fill="#eafafc" stroke="#308890" stroke-width="1"><path d="M24 315l3-3h6v4h-6v2h-3z M33 310l3-1v8l-3 1z"/><path d="M24 330l3-3h6v4h-6v2h-3z M33 325l3-1v8l-3 1z"/></g>
<!-- xm sm -->
<g stroke="#206868" stroke-width="0.9"><path d="M24 345l3-3h6v3.5h-9z" fill="#a8e8e8"/><path d="M24 345.5h9v2.5h-9z" fill="#70c8c8"/><path d="M32.5 341l4-2v8l-4 1.5z" fill="#209090"/>
<path d="M24 360l3-3h6v3.5h-9z" fill="#a8e8e8"/><path d="M24 360.5h9v2.5h-9z" fill="#70c8c8"/><path d="M32.5 356l4-2v8l-4 1.5z" fill="#209090"/></g>
<!-- red arrow -->
<path d="M26 372h4v-3l4.5 4.5-4.5 4.5v-3h-4z" fill="#e00010" stroke="#800000" stroke-width="0.6"/>
</svg>
<!-- h scrollbar -->
<div class="a" style="left:5px;top:553px;width:188px;height:12px;background:#d4d0c8"></div>
<div class="btn" style="left:5px;top:553px;width:12px;height:12px"></div>
<div class="a" style="left:17px;top:553px;width:163px;height:12px;background:#ebe9e4"></div>
<div class="btn" style="left:17px;top:553px;width:156px;height:12px;background:#d4d0c8"></div>
<div class="btn" style="left:180px;top:553px;width:13px;height:12px"></div>
<svg style="left:0;top:0" width="200" height="600"><path d="M13 556v6l-3-3z M184 556v6l3-3z" fill="#000"/></svg>
<!-- splitter -->
<div class="a" style="left:195px;top:150px;width:1px;height:418px;background:#404040"></div>
<div class="a" style="left:204px;top:124px;width:1px;height:180px;background:#f4f4f4"></div>
<div class="a" style="left:207px;top:124px;width:1px;height:180px;background:#f4f4f4"></div>
<div class="a" style="left:204px;top:390px;width:1px;height:178px;background:#f4f4f4"></div>
<div class="a" style="left:207px;top:390px;width:1px;height:178px;background:#f4f4f4"></div>
<svg style="left:0;top:0" width="215" height="570">
<defs><pattern id="dots" x="196" y="209" width="3" height="3" patternUnits="userSpaceOnUse"><rect x="0" y="0" width="1" height="1" fill="#a8a8a8"/><rect x="1" y="1" width="1" height="1" fill="#f8f8f8"/></pattern></defs>
<rect x="196" y="209" width="7" height="94" fill="url(#dots)"/>
<rect x="196" y="392" width="7" height="88" fill="url(#dots)"/>
<path d="M196.5 209v94M196.5 392v88" stroke="#606060" stroke-dasharray="1 2"/>
<path d="M206.5 314v72" stroke="#3030a0" stroke-dasharray="1 2"/>
<g fill="none" stroke="#2020a0" stroke-width="1.4">
<path d="M201 250l-2.5 2.5 2.5 2.5M201 260l-2.5 2.5 2.5 2.5M201 429l-2.5 2.5 2.5 2.5M201 438.5l-2.5 2.5 2.5 2.5"/>
<path d="M204.5 305l3 2.7-3 2.7M204.5 386l3 2.7-3 2.7"/>
</g>
</svg>
<!-- status -->
<div class="a" style="left:6px;top:584px;width:5px;height:5px;border-radius:50%;background:#0010e0"></div>
<div class="tb" style="left:15px;top:578px">组件元件已经成功分解。</div>
<div class="a sh" style="left:0;top:595px;width:650px;height:1px"></div>
<div class="a hl" style="left:0;top:596px;width:650px;height:1px"></div>
<div class="a" style="left:481px;top:597px;width:2px;height:18px;border-left:1px solid #808080;border-right:1px solid #fff"></div>
<div class="a" style="left:562px;top:598px;width:88px;height:17px;background:#fff;border-left:1px solid #404040;border-top:1px solid #404040"></div>
<div class="tb" style="left:567px;top:599px">智能</div>

<!-- taskbar -->
<div class="a" style="left:0;top:617px;width:650px;height:1px;background:#808080"></div>
<div class="a" style="left:0;top:618px;width:650px;height:1px;background:#fff"></div>
<!-- start button -->
<div class="a" style="left:0;top:621px;width:39px;height:16px;border-top:1px solid #fff;border-right:1px solid #404040;box-shadow:inset -1px 0 0 #808080"></div>
<div class="tb" style="left:16px;top:621px;font-size:10.5px">开始</div>

<!-- task buttons -->
<div class="a" style="left:118px;top:621px;width:121px;height:16px;border-top:1px solid #fff;border-left:1px solid #fff;border-right:1px solid #404040;box-shadow:inset -1px 0 0 #808080"></div>
<div class="a" style="left:242px;top:621px;width:122px;height:16px;border-top:1px solid #fff;border-left:1px solid #fff;border-right:1px solid #404040;box-shadow:inset -1px 0 0 #808080"></div>
<div class="a" style="left:367px;top:621px;width:122px;height:16px;background:#e6e4df;border-top:1px solid #404040;border-left:1px solid #404040;border-right:1px solid #fff;box-shadow:inset 1px 1px 0 #808080"></div>
<div class="a" style="left:491px;top:621px;width:122px;height:16px;border-top:1px solid #fff;border-left:1px solid #fff;border-right:1px solid #404040;box-shadow:inset -1px 0 0 #808080"></div>
<div class="a" style="left:616px;top:621px;width:40px;height:16px;border-top:1px solid #fff;border-left:1px solid #fff"></div>
<svg style="left:0;top:0" width="650" height="650">
<path d="M2 625.5q3-1.5 5.5 0v4.5q-2.5-1.5-5.5 0z" fill="#f04020"/>
<path d="M8 625.5q3 1.5 5.5 0v4.5q-2.5 1.5-5.5 0z" fill="#30b030"/>
<path d="M2 630.5q3-1.5 5.5 0v4.5q-2.5-1.5-5.5 0z" fill="#2060e0"/>
<path d="M8 630.5q3 1.5 5.5 0v4.5q-2.5 1.5-5.5 0z" fill="#f0c010"/>
<!-- quick launch -->
<rect x="46" y="625.5" width="13" height="11.5" fill="#1850c8"/>
<text x="48.5" y="636" font-family="Liberation Sans" font-weight="bold" font-size="11" fill="#fff">C</text>
<rect x="65.5" y="625.5" width="12" height="11.5" rx="2" fill="#c8e4f8" stroke="#4080c0" stroke-width="0.8"/>
<path d="M68 631.5h7c0-2.5-1.5-3.5-3.3-3.5s-3.7 1.5-3.7 3.7 1.5 3.3 3.7 3.3c1.2 0 2.2-0.5 2.8-1.2" fill="none" stroke="#1060c0" stroke-width="1.5"/>
<path d="M77 627c-2-2-6-2-9 1" fill="none" stroke="#f0a020" stroke-width="0.9"/>
<path d="M86 632c0-4 3-6 6-6l4-2-1 3c1 1 2 3 1 5-1 3-4 4-6 4s-4-1-4-4z" fill="#e01010"/>
<circle cx="90.5" cy="632" r="2" fill="#fff"/>
<text x="107" y="633" font-family="Liberation Sans" font-weight="bold" font-size="12" fill="#000">»</text>
<!-- task icons -->
<path d="M121.5 627.5h4l1 1h7v7.5h-12z" fill="#f8d860" stroke="#a08020" stroke-width="0.8"/>
<path d="M121.5 636l2.5-5h11.5l-2 5z" fill="#fce888" stroke="#a08020" stroke-width="0.8"/>
<circle cx="252" cy="630" r="5.5" fill="#30b040"/>
<path d="M252 630L252 624.5A5.5 5.5 0 0 1 257.5 630z" fill="#f0d020"/>
<path d="M252 630L246.5 630A5.5 5.5 0 0 1 252 624.5z" fill="#e03020"/>
<path d="M252 630L252 635.5A5.5 5.5 0 0 1 246.5 630z" fill="#2050d0"/>
<circle cx="252" cy="630" r="1.5" fill="#fff"/>
<path d="M373 636v-8h2.5v5.5h6v-7h2.5v9.5z" fill="#10a050"/>
<rect x="378" y="623.5" width="2" height="7" fill="#40c0e0"/>
<circle cx="501.5" cy="631" r="6" fill="#d01818"/>
<ellipse cx="500" cy="629" rx="3" ry="2.5" fill="#f8a0a0"/>
<rect x="620.5" y="625.5" width="11" height="10" fill="#60d8e8" stroke="#306070"/>
</svg>
<div class="tb" style="left:138px;top:622px">模具分型面<span class="m">01</span></div>
<div class="tb" style="left:262px;top:622px">豪杰超级解霸<span class="m" style="letter-spacing:-0.5px">3000</span></div>
<div class="tb" style="left:387px;top:622px"><span class="m">MFG0003 </span>(活动的)<span class="m">...</span></div>
<div class="tb" style="left:510px;top:622px"><span class="m" style="letter-spacing:-0.3px">Camtasia </span>录像器<span class="m"> ...</span></div>
<div class="tb m" style="left:634px;top:622px">MFG</div>
<div class="a" style="left:0;top:637px;width:650px;height:6px;background:#2c2c2c"></div>
<div class="a" style="left:0;top:643px;width:650px;height:1px;background:#18344e"></div>
<div class="a" style="left:0;top:644px;width:650px;height:5px;background:#1c7ac8"></div>
<div class="a" style="left:0;top:649px;width:650px;height:1px;background:#1460a8"></div>
</body></html>
